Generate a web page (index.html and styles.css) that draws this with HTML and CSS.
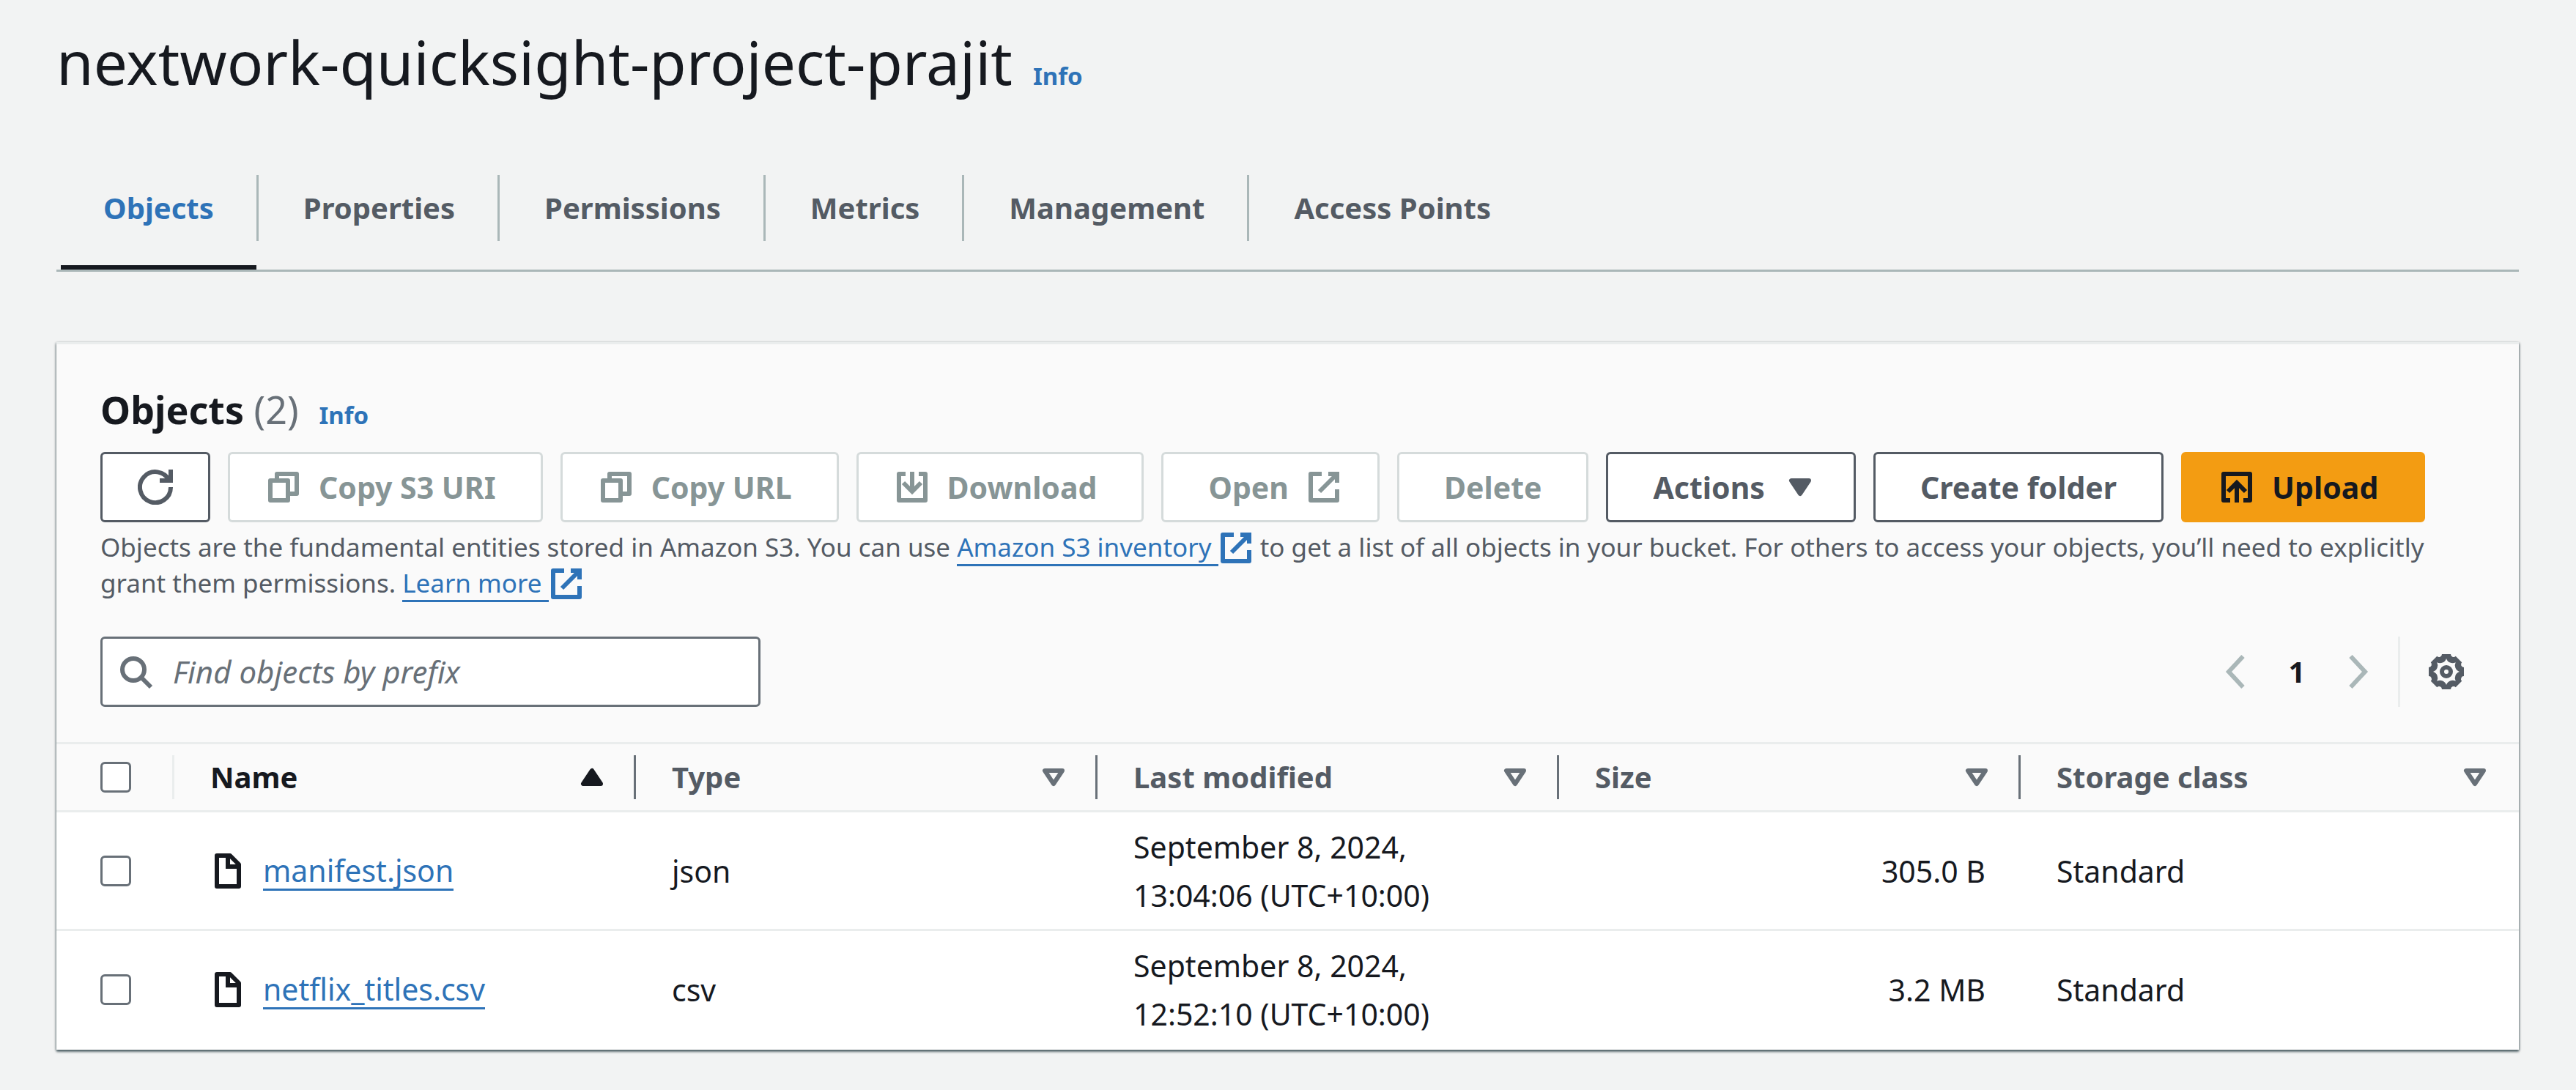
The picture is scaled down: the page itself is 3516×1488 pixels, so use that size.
FILE: index.html
```html
<!DOCTYPE html>
<html lang="en">
<head>
<meta charset="utf-8">
<title>nextwork-quicksight-project-prajit</title>
<link rel="stylesheet" href="styles.css">
</head>
<body>
<svg class="sprite" aria-hidden="true">
  <symbol id="refresh" viewBox="0 0 16 16"><path d="M10 5h5V0M15 8a7 7 0 1 1-.7-3"/></symbol>
  <symbol id="copy" viewBox="0 0 16 16"><path d="M2 5h8v9H2zM5 5V2h9v9h-4" stroke-linejoin="round"/></symbol>
  <symbol id="external" viewBox="0 0 16 16"><path d="M10 2h4v4M6 10l8-8"/><path d="M14 9v5H2V2h5" stroke-linejoin="round"/></symbol>
  <symbol id="download" viewBox="0 0 16 16"><path d="M5 2H2v12h12V2h-3" stroke-linejoin="round"/><path d="M8 1v9M4 6l4 4 4-4"/></symbol>
  <symbol id="upload" viewBox="0 0 16 16"><path d="M5 14H2V2h12v12h-3" stroke-linejoin="round"/><path d="M8 15V6M4 10l4-4 4 4"/></symbol>
  <symbol id="search" viewBox="0 0 16 16"><circle cx="7" cy="7" r="5"/><path d="m15 15-4.500-4.500"/></symbol>
  <symbol id="left" viewBox="0 0 16 16"><path d="M11.500 1 5 8l6.500 7"/></symbol>
  <symbol id="right" viewBox="0 0 16 16"><path d="m4.500 1 6.500 7-6.500 7"/></symbol>
  <symbol id="file" viewBox="0 0 16 16"><path d="M3 1h6l4 4v10H3z" stroke-linejoin="round"/><path d="M8 1v5h5"/></symbol>
  <symbol id="gear" viewBox="-8 -8 16 16">
    <path fill="currentColor" stroke="none" fill-rule="evenodd" d="M-2-8H2A1.300 1.300 0 0 0 4.240-7.070L7.070-4.240A1.300 1.300 0 0 0 8-2V2A1.300 1.300 0 0 0 7.070 4.240L4.240 7.070A1.300 1.300 0 0 0 2 8H-2A1.300 1.300 0 0 0-4.240 7.070L-7.070 4.240A1.300 1.300 0 0 0-8 2V-2A1.300 1.300 0 0 0-7.070-4.240L-4.240-7.070A1.300 1.300 0 0 0-2-8zM0-6A3 3 0 0 0 4.240-4.240A3 3 0 0 0 6 0A3 3 0 0 0 4.240 4.240A3 3 0 0 0 0 6A3 3 0 0 0-4.240 4.240A3 3 0 0 0-6 0A3 3 0 0 0-4.240-4.240A3 3 0 0 0 0-6z"/>
    <circle r="2"/>
  </symbol>
  <symbol id="down" viewBox="0 0 16 16"><path d="M4 5h8l-4 6z" fill="currentColor" stroke-linejoin="round"/></symbol>
  <symbol id="down-open" viewBox="0 0 16 16"><path d="M4 5h8l-4 6z" stroke-linejoin="round"/></symbol>
  <symbol id="up" viewBox="0 0 16 16"><path d="M4 11h8l-4-6z" fill="currentColor" stroke-linejoin="round"/></symbol>
</svg>

<header class="page-header">
  <h1>nextwork-quicksight-project-prajit</h1>
  <a class="info" href="#">Info</a>
</header>

<nav class="tabs">
  <a class="tab tab-active" href="#">Objects</a>
  <a class="tab" href="#">Properties</a>
  <a class="tab" href="#">Permissions</a>
  <a class="tab" href="#">Metrics</a>
  <a class="tab" href="#">Management</a>
  <a class="tab" href="#">Access Points</a>
</nav>

<main class="panel">
  <div class="panel-head">
    <div class="panel-title">
      <h2>Objects <span class="count">(2)</span></h2>
      <a class="info" href="#">Info</a>
    </div>
    <div class="actions">
      <button class="btn btn-icon" aria-label="Refresh"><svg class="icon"><use href="#refresh"/></svg></button>
      <button class="btn" disabled><svg class="icon lead"><use href="#copy"/></svg>Copy S3 URI</button>
      <button class="btn" disabled><svg class="icon lead"><use href="#copy"/></svg>Copy URL</button>
      <button class="btn" disabled><svg class="icon lead"><use href="#download"/></svg>Download</button>
      <button class="btn" disabled>Open<svg class="icon trail"><use href="#external"/></svg></button>
      <button class="btn" disabled>Delete</button>
      <button class="btn">Actions<svg class="icon trail"><use href="#down"/></svg></button>
      <button class="btn">Create folder</button>
      <button class="btn btn-primary"><svg class="icon lead"><use href="#upload"/></svg>Upload</button>
    </div>
    <p class="description">Objects are the fundamental entities stored in Amazon S3. You can use <a class="link" href="#">Amazon S3 inventory </a><svg class="icon ext"><use href="#external"/></svg> to get a list of all objects in your bucket. For others to access your objects, you’ll need to explicitly grant them permissions. <a class="link" href="#">Learn more </a><svg class="icon ext"><use href="#external"/></svg></p>
    <div class="filter-row">
      <label class="search">
        <svg class="icon"><use href="#search"/></svg>
        <input type="text" placeholder="Find objects by prefix" aria-label="Find objects by prefix">
      </label>
      <div class="pager">
        <button class="plain page-arrow" aria-label="Previous page"><svg class="icon"><use href="#left"/></svg></button>
        <button class="plain page-number">1</button>
        <button class="plain page-arrow" aria-label="Next page"><svg class="icon"><use href="#right"/></svg></button>
        <button class="plain settings" aria-label="Settings"><svg class="icon"><use href="#gear"/></svg></button>
      </div>
    </div>
  </div>

  <table class="objects">
    <colgroup><col class="col-check"><col class="col-data"><col class="col-data"><col class="col-data"><col class="col-data"><col></colgroup>
    <thead>
      <tr>
        <th><div class="head faint"><input type="checkbox" aria-label="Select all"></div></th>
        <th><div class="head sorted">Name<svg class="icon"><use href="#up"/></svg></div></th>
        <th><div class="head">Type<svg class="icon"><use href="#down-open"/></svg></div></th>
        <th><div class="head">Last modified<svg class="icon"><use href="#down-open"/></svg></div></th>
        <th><div class="head">Size<svg class="icon"><use href="#down-open"/></svg></div></th>
        <th><div class="head last">Storage class<svg class="icon"><use href="#down-open"/></svg></div></th>
      </tr>
    </thead>
    <tbody>
      <tr>
        <td><input type="checkbox" aria-label="Select manifest.json"></td>
        <td><div class="file"><svg class="icon"><use href="#file"/></svg><a class="link" href="#">manifest.json</a></div></td>
        <td>json</td>
        <td>September 8, 2024,<br>13:04:06 (UTC+10:00)</td>
        <td class="number">305.0 B</td>
        <td>Standard</td>
      </tr>
      <tr>
        <td><input type="checkbox" aria-label="Select netflix_titles.csv"></td>
        <td><div class="file"><svg class="icon"><use href="#file"/></svg><a class="link" href="#">netflix_titles.csv</a></div></td>
        <td>csv</td>
        <td>September 8, 2024,<br>12:52:10 (UTC+10:00)</td>
        <td class="number">3.2 MB</td>
        <td>Standard</td>
      </tr>
    </tbody>
  </table>
</main>
</body>
</html>
```
FILE: styles.css
```css
* { box-sizing: border-box; }

body {
  margin: 0;
  padding: 30px 78px 56px 77px;
  background: #f2f3f3;
  color: #16191f;
  font-family: "Noto Sans", sans-serif;
  font-size: 40px;
  line-height: 66px;
}

h1, h2, p { margin: 0; }
a { color: #2e73b8; text-decoration: none; }
button, input { font: inherit; color: inherit; }

.sprite { position: absolute; width: 0; height: 0; }

.icon {
  flex: none;
  width: 48px;
  height: 48px;
  fill: none;
  stroke: currentColor;
  stroke-width: 2;
  overflow: visible;
}

.info { font-size: 33px; font-weight: 700; }

.page-header {
  display: flex;
  align-items: baseline;
  gap: 28px;
  height: 108px;
  line-height: 108px;
}
h1 { font-size: 82px; font-weight: 400; }

.tabs {
  display: flex;
  gap: 6px;
  margin-top: 101px;
  padding-left: 6px;
  border-bottom: 3px solid #aab7b8;
}
.tab {
  position: relative;
  padding: 0 58px;
  height: 129px;
  line-height: 90px;
  color: #545b64;
  font-weight: 700;
}
.tab:not(:last-child)::before {
  content: "";
  position: absolute;
  top: 0;
  right: -3px;
  width: 3px;
  height: 90px;
  background: #aab7b8;
}
.tab-active { color: #2e73b8; border-bottom: 6px solid #16191f; }

.panel {
  margin-top: 96px;
  background: #fff;
  box-shadow: 0 3px 3px 0 rgba(0, 28, 36, 0.5), 1px 1px 3px 0 rgba(0, 28, 36, 0.3), -1px 1px 3px 0 rgba(0, 28, 36, 0.3);
}
.panel-head {
  padding: 48px 60px 48px;
  background: #fafafa;
  border-top: 3px solid #eaeded;
}
.panel-title { display: flex; align-items: baseline; gap: 28px; margin-bottom: 10px; line-height: 81px; }
h2 { font-size: 52px; font-weight: 700; }
.count { color: #687078; font-weight: 400; }

.actions { display: flex; gap: 24px; }
.btn {
  display: flex;
  align-items: center;
  justify-content: center;
  height: 96px;
  padding: 0 61px;
  border: 3px solid #545b64;
  border-radius: 6px;
  background: #fff;
  color: #545b64;
  font-size: 41px;
  font-weight: 700;
  white-space: nowrap;
}
.btn:disabled { border-color: #d5dbdb; color: #879596; }
.btn-icon { padding: 0 48px; }
.btn-primary { border-color: #f39c12; background: #f39c12; color: #16191f; }
.lead { margin: 0 24px 0 -12px; }
.trail { margin: 0 -12px 0 24px; }

.description {
  max-width: 3180px;
  margin: 10px 0 48px;
  color: #545b64;
  font-size: 35px;
  line-height: 48px;
}
.link { border-bottom: 3px solid #2e73b8; }
.ext { color: #2e73b8; vertical-align: -12px; }

.filter-row { display: flex; justify-content: space-between; align-items: center; }
.search {
  display: flex;
  align-items: center;
  gap: 27px;
  width: 901px;
  height: 96px;
  padding: 0 21px;
  border: 3px solid #687078;
  border-radius: 6px;
  background: #fff;
  color: #687078;
}
.search input { flex: 1; min-width: 0; padding: 0; border: 0; outline: 0; background: none; font-size: 42px; }
.search input::placeholder { color: #687078; font-style: italic; opacity: 1; }

.pager { display: flex; align-items: center; }
.plain { display: flex; align-items: center; justify-content: center; padding: 0; border: 0; background: none; }
.page-arrow { width: 60px; color: #aab7b8; }
.page-number { width: 108px; color: #16191f; font-weight: 700; }
.settings { height: 96px; margin-left: 24px; padding: 0 15px 0 39px; border-left: 3px solid #eaeded; color: #545b64; }

.objects { width: 100%; table-layout: fixed; border-collapse: separate; border-spacing: 0; }
.col-check { width: 161px; }
.col-data { width: 630px; }
th, td { padding: 0; text-align: left; }
th { height: 96px; background: #fafafa; border-top: 3px solid #eaeded; border-bottom: 3px solid #eaeded; color: #545b64; }
td { padding: 14px 48px 13px 49px; border-bottom: 3px solid #eaeded; font-size: 41px; }
tr:last-child td { border-bottom-color: #fff; }
.head {
  display: flex;
  align-items: center;
  justify-content: space-between;
  height: 60px;
  padding: 0 33px 0 49px;
  border-right: 3px solid #687078;
}
.head .icon { color: #687078; }
.faint { border-right-color: #eaeded; }
.last { border-right-color: transparent; }
.sorted, .sorted .icon { color: #16191f; }
th:first-child .head, td:first-child { padding: 0 0 0 60px; }
.number { text-align: right; }
.file { display: flex; align-items: center; gap: 24px; }
.file .link { line-height: 50px; }

input[type="checkbox"] {
  appearance: none;
  display: block;
  width: 42px;
  height: 42px;
  margin: 0;
  border: 3px solid #687078;
  border-radius: 6px;
  background: #fff;
}
```
